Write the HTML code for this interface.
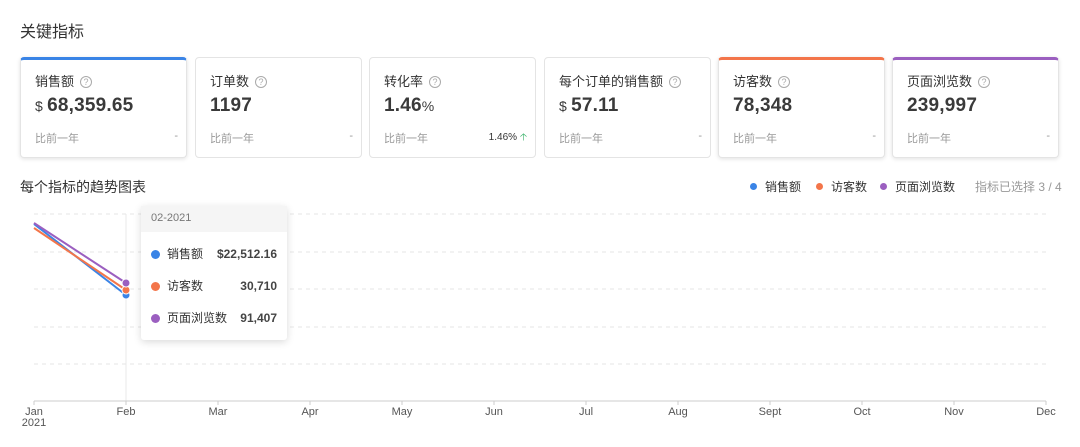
<!DOCTYPE html>
<html><head><meta charset="utf-8"><style>
*{margin:0;padding:0;box-sizing:border-box}
body{width:1080px;height:447px;background:#fff;font-family:"Liberation Sans","Noto Sans CJK SC",sans-serif;color:#333;position:relative;overflow:hidden}
.t{position:absolute;left:20px;top:18px;font-size:16px;color:#333}
.card{position:absolute;top:57px;width:167px;height:101px;border:1px solid #e4e4e4;border-radius:4px;background:#fff}
.card.sel{box-shadow:0 1px 4px rgba(0,0,0,.12);border-top:3px solid}
.lab{position:absolute;left:14px;top:13px;font-size:13px;color:#333}
.q{display:inline-block;width:12px;height:12px;border:1px solid #aaa;border-radius:50%;font-size:9px;color:#aaa;text-align:center;line-height:10px;margin-left:6px;vertical-align:1px}
.v{position:absolute;left:14px;top:37px;font-size:19px;font-weight:bold;color:#3a3a3a;letter-spacing:0.2px}
.v small{font-size:14px;font-weight:normal}
.c{position:absolute;left:14px;top:72px;font-size:11px;color:#999}
.d{position:absolute;right:8px;top:72px;font-size:11px;color:#999}
.sel .lab{top:11px}.sel .v{top:35px}.sel .c,.sel .d{top:70px}
.ct{position:absolute;left:20px;top:177px;font-size:14px}
.leg{position:absolute;top:178px;font-size:12px;color:#333}
.leg i{display:inline-block;width:7px;height:7px;border-radius:50%;margin-right:8px;vertical-align:1px}
.tip{position:absolute;left:141px;top:206px;width:146px;height:134px;background:#fff;border-radius:3px;box-shadow:0 2px 8px rgba(0,0,0,.15);font-size:12px}
.tip .h{height:26px;background:#f5f5f5;color:#777;font-size:11px;padding:6px 0 0 10px}
.row{position:absolute;left:10px;width:126px;line-height:16px;height:16px}
.row i{display:inline-block;width:9px;height:9px;border-radius:50%;margin-right:7px;vertical-align:-1px}
.row b{position:absolute;right:0;top:0;font-weight:bold;color:#444;line-height:16px}
</style></head><body>
<div class="t">关键指标</div>
<div class="card sel" style="left:20px;border-top-color:#3a84e6"><div class="lab">销售额<span class="q">?</span></div><div class="v"><small>$ </small>68,359.65</div><div class="c">比前一年</div><div class="d">-</div></div>
<div class="card" style="left:195px"><div class="lab">订单数<span class="q">?</span></div><div class="v">1197</div><div class="c">比前一年</div><div class="d">-</div></div>
<div class="card" style="left:369px"><div class="lab">转化率<span class="q">?</span></div><div class="v">1.46<small>%</small></div><div class="c">比前一年</div><div class="d" style="color:#333;font-size:10px">1.46% <span style="color:#3bb36b">🡡</span></div></div>
<div class="card" style="left:544px"><div class="lab">每个订单的销售额<span class="q">?</span></div><div class="v"><small>$ </small>57.11</div><div class="c">比前一年</div><div class="d">-</div></div>
<div class="card sel" style="left:718px;border-top-color:#f3754a"><div class="lab">访客数<span class="q">?</span></div><div class="v">78,348</div><div class="c">比前一年</div><div class="d">-</div></div>
<div class="card sel" style="left:892px;border-top-color:#9b5fc0"><div class="lab">页面浏览数<span class="q">?</span></div><div class="v">239,997</div><div class="c">比前一年</div><div class="d">-</div></div>
<div class="ct">每个指标的趋势图表</div>
<div class="leg" style="left:750px"><i style="background:#3a84e6"></i>销售额</div>
<div class="leg" style="left:816px"><i style="background:#f3754a"></i>访客数</div>
<div class="leg" style="left:880px"><i style="background:#9b5fc0"></i>页面浏览数</div>
<div class="leg" style="left:975px;color:#999">指标已选择 3 / 4</div>
<svg width="1080" height="447" style="position:absolute;left:0;top:0">
<g stroke="#e6e6e6" stroke-dasharray="4 4">
<line x1="34" y1="214" x2="1046" y2="214"/><line x1="34" y1="252" x2="1046" y2="252"/><line x1="34" y1="289" x2="1046" y2="289"/><line x1="34" y1="327" x2="1046" y2="327"/><line x1="34" y1="364" x2="1046" y2="364"/></g>
<line x1="126" y1="214" x2="126" y2="401" stroke="#e8e8e8"/>
<line x1="34" y1="401" x2="1046" y2="401" stroke="#ccc"/>
<g stroke="#ccc"><line x1="34" y1="401" x2="34" y2="405"/><line x1="126" y1="401" x2="126" y2="405"/><line x1="218" y1="401" x2="218" y2="405"/><line x1="310" y1="401" x2="310" y2="405"/><line x1="402" y1="401" x2="402" y2="405"/><line x1="494" y1="401" x2="494" y2="405"/><line x1="586" y1="401" x2="586" y2="405"/><line x1="678" y1="401" x2="678" y2="405"/><line x1="770" y1="401" x2="770" y2="405"/><line x1="862" y1="401" x2="862" y2="405"/><line x1="954" y1="401" x2="954" y2="405"/><line x1="1046" y1="401" x2="1046" y2="405"/></g>
<g font-size="11" fill="#555" text-anchor="middle" font-family="Liberation Sans">
<text x="34" y="415">Jan</text><text x="34" y="426">2021</text><text x="126" y="415">Feb</text><text x="218" y="415">Mar</text><text x="310" y="415">Apr</text><text x="402" y="415">May</text><text x="494" y="415">Jun</text><text x="586" y="415">Jul</text><text x="678" y="415">Aug</text><text x="770" y="415">Sept</text><text x="862" y="415">Oct</text><text x="954" y="415">Nov</text><text x="1046" y="415">Dec</text></g>
<line x1="34" y1="224" x2="126" y2="295" stroke="#3a84e6" stroke-width="2"/>
<line x1="34" y1="228" x2="126" y2="290" stroke="#f3754a" stroke-width="2"/>
<line x1="34" y1="223" x2="126" y2="283" stroke="#9b5fc0" stroke-width="2"/>
<circle cx="126" cy="295" r="4" fill="#3a84e6" stroke="#fff"/><circle cx="126" cy="290" r="4" fill="#f3754a" stroke="#fff"/><circle cx="126" cy="283" r="4" fill="#9b5fc0" stroke="#fff"/>
</svg>
<div class="tip"><div class="h">02-2021</div>
<div class="row" style="top:40px"><i style="background:#3a84e6"></i>销售额<b>$22,512.16</b></div>
<div class="row" style="top:72px"><i style="background:#f3754a"></i>访客数<b>30,710</b></div>
<div class="row" style="top:104px"><i style="background:#9b5fc0"></i>页面浏览数<b>91,407</b></div>
</div>
</body></html>
